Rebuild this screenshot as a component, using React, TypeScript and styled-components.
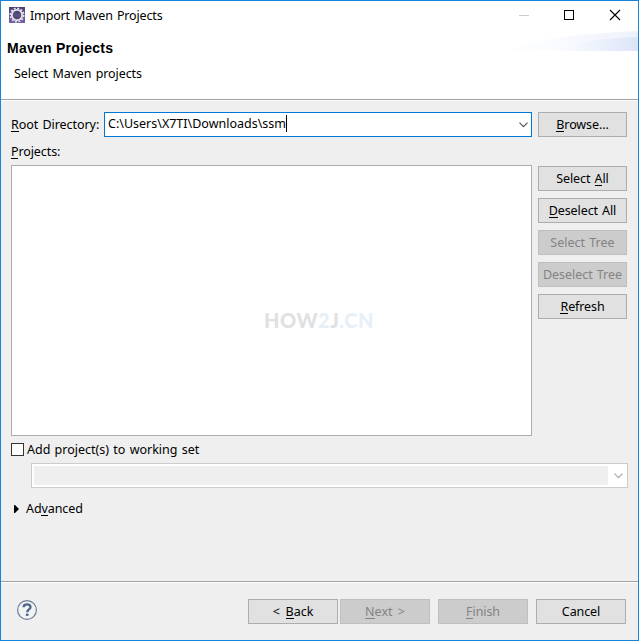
import React from "react";
import styled, { createGlobalStyle } from "styled-components";

const GlobalStyle = createGlobalStyle`
  * { box-sizing: border-box; }
  body {
    margin: 0;
    background: #efefef;
    font: 12.5px/17px "Noto Sans", "Noto Sans CJK SC", sans-serif;
    color: #000;
  }
`;

const Window = styled.main`
  width: 639px;
  height: 641px;
  border: 1px solid #1883d7;
  background: #efefef;
  display: flex;
  flex-direction: column;
  overflow: hidden;
`;

const Label = styled.span<{ $spacing?: number; $word?: number }>`
  white-space: pre;
  letter-spacing: ${(p) => p.$spacing ?? 0}px;
  word-spacing: ${(p) => p.$word ?? 1}px;
`;

const Key = styled.span`
  box-shadow: 0 1px 0 currentColor;
  display: inline-block;
  height: 15px;
  line-height: 17px;
  vertical-align: top;
`;

const TitleBar = styled.header`
  height: 30px;
  background: #fff;
  display: flex;
  align-items: flex-start;
  padding: 6px 0 0 8px;
`;

const TitleText = styled(Label)`
  margin-left: 5px;
  flex: 1;
`;

const WindowControls = styled.svg`
  width: 119px;
  height: 20px;
  display: block;
`;

const Banner = styled.section`
  height: 69px;
  background: #fff;
  border-bottom: 1px solid #a0a0a0;
  display: flex;
  justify-content: space-between;
`;

const BannerText = styled.div`
  padding: 9px 0 0 6px;
  display: flex;
  flex-direction: column;
`;

const Heading = styled.h1<{ $spacing: number }>`
  margin: 0;
  font: bold 14px/17px "Liberation Sans", Arial, sans-serif;
  letter-spacing: ${(p) => p.$spacing}px;
`;

const Subtitle = styled(Label)`
  margin: 8px 0 0 7px;
`;

const Swoosh = styled.svg`
  width: 140px;
  height: 20px;
  display: block;
`;

const Body = styled.section`
  flex: 1;
  border-top: 1px solid #fff;
  padding: 11px 10px 0;
  display: flex;
  flex-direction: column;
`;

const Row = styled.div`
  display: flex;
  align-items: flex-start;
`;

const FieldLabel = styled.label`
  width: 93px;
  padding-top: 4px;
  white-space: nowrap;
`;

const Combo = styled.div`
  width: 428px;
  height: 25px;
  border: 1px solid #0078d7;
  background: #fff;
  display: flex;
  align-items: center;
  padding: 0 3px;
  margin-right: 6px;
`;

const ComboText = styled.div`
  flex: 1;
  display: flex;
  align-items: center;
  padding-bottom: 2px;
`;

const Caret = styled.i`
  width: 1px;
  height: 17px;
  background: #000;
`;

const Chevron = styled.svg`
  width: 9px;
  height: 6px;
  display: block;
`;

const Button = styled.button<{ $width: number }>`
  width: ${(p) => p.$width}px;
  height: 25px;
  padding: 0;
  border: 1px solid #adadad;
  border-radius: 0;
  background: #e1e1e1;
  color: #000;
  font: inherit;
  display: flex;
  justify-content: center;
  align-items: center;
  &:disabled {
    background: #ccc;
    border-color: #bfbfbf;
    color: #838383;
  }
`;

const ProjectsLabel = styled.div`
  padding-top: 6px;
  height: 28px;
`;

const ProjectList = styled.div`
  width: 521px;
  height: 271px;
  border: 1px solid #abadb3;
  background: #fff;
  margin-right: 6px;
  display: flex;
  justify-content: center;
  align-items: center;
`;

const Watermark = styled.div`
  margin: 38px 0 0 95px;
  font: 900 20px/24px Lato, sans-serif;
  letter-spacing: 0.5px;
  color: #e0e1e3;
`;

const WatermarkBlue = styled.span`
  color: #e7f0f9;
`;

const ButtonColumn = styled.div`
  display: flex;
  flex-direction: column;
  gap: 7px;
  padding-top: 1px;
`;

const CheckRow = styled.label`
  display: flex;
  align-items: center;
  gap: 3px;
  margin-top: 5px;
  height: 17px;
`;

const CheckBox = styled.span`
  width: 13px;
  height: 13px;
  border: 1px solid #333;
  background: #fff;
`;

const DisabledCombo = styled.div`
  width: 597px;
  height: 25px;
  margin: 5px 0 0 20px;
  border: 1px solid #ccc;
  background: #fff;
  padding: 2px 4px 2px 2px;
  display: flex;
  align-items: center;
  justify-content: space-between;
`;

const DisabledField = styled.div`
  width: 574px;
  height: 19px;
  background: #efefef;
`;

const AdvancedRow = styled.div`
  display: flex;
  align-items: center;
  gap: 7px;
  margin: 12px 0 0 3px;
  height: 17px;
`;

const Triangle = styled.svg`
  width: 5px;
  height: 8px;
`;

const Footer = styled.footer`
  height: 59px;
  border-top: 1px solid #a0a0a0;
  box-shadow: inset 0 1px 0 #fff;
  padding: 17px 12px 0 15px;
  display: flex;
  align-items: flex-start;
`;

const HelpIcon = styled.svg`
  width: 22px;
  height: 22px;
  margin-right: auto;
`;

const ButtonPair = styled.div`
  display: flex;
  gap: 2px;
  margin-right: 8px;
`;

const LastButtons = styled.div`
  display: flex;
  gap: 8px;
`;

function EclipseIcon() {
  return (
    <svg width="16" height="16" viewBox="0 0 16 16">
      <defs>
        <linearGradient id="purple" x1="0" y1="0" x2="0" y2="1">
          <stop offset="0" stopColor="#4b3f76" />
          <stop offset="1" stopColor="#7460a4" />
        </linearGradient>
      </defs>
      <rect width="16" height="16" fill="url(#purple)" />
      <circle cx="8" cy="8" r="6.7" fill="none" stroke="#e9e7ee" strokeWidth="1.6" strokeDasharray="2 1.51" />
      <circle cx="8" cy="8" r="5.2" fill="#4c4374" stroke="#e4e2ea" strokeWidth="1.8" />
      <path d="M4 7.2h8M4 9h8" stroke="#6f668f" strokeWidth="0.7" />
    </svg>
  );
}

function DownChevron({ color }: { color: string }) {
  return (
    <Chevron viewBox="0 0 9 6">
      <path d="M0.5 0.7L4.5 4.7L8.5 0.7" fill="none" stroke={color} strokeWidth="1.2" />
    </Chevron>
  );
}

export default function App() {
  return (
    <>
      <GlobalStyle />
      <Window>
        <TitleBar>
          <EclipseIcon />
          <TitleText $spacing={-0.15}>Import Maven Projects</TitleText>
          <WindowControls viewBox="0 0 119 20">
            <path d="M0 8.5h10" stroke="#ccc" />
            <rect x="45.5" y="3.5" width="9" height="9" fill="none" stroke="#000" />
            <path d="M91 3l10 10M101 3l-10 10" stroke="#000" strokeWidth="1.1" />
          </WindowControls>
        </TitleBar>
        <Banner>
          <BannerText>
            <Heading $spacing={0.25}>Maven Projects</Heading>
            <Subtitle $spacing={-0.08}>Select Maven projects</Subtitle>
          </BannerText>
          <Swoosh viewBox="0 0 140 20">
            <defs>
              <linearGradient id="sky" x1="0" x2="1">
                <stop offset="0" stopColor="#fff" />
                <stop offset="0.4" stopColor="#f4f7fe" />
                <stop offset="1" stopColor="#dce4f7" />
              </linearGradient>
            </defs>
            <path d="M2 20C42 7 90 2 140 0V20Z" fill="url(#sky)" opacity="0.5" />
            <path d="M42 20C80 10 110 7 140 6V20Z" fill="url(#sky)" />
          </Swoosh>
        </Banner>
        <Body>
          <Row>
            <FieldLabel><Label $spacing={-0.05}><Key>R</Key>oot Directory:</Label></FieldLabel>
            <Combo>
              <ComboText>
                <Label>C:\Users\X7TI\Downloads\ssm</Label>
                <Caret />
              </ComboText>
              <DownChevron color="#555" />
            </Combo>
            <Button $width={89}><Label $spacing={-0.1}><Key>B</Key>rowse...</Label></Button>
          </Row>
          <ProjectsLabel><Label $spacing={-0.1}><Key>P</Key>rojects:</Label></ProjectsLabel>
          <Row>
            <ProjectList>
              <Watermark>
                HOW<WatermarkBlue>2</WatermarkBlue>J<WatermarkBlue>.CN</WatermarkBlue>
              </Watermark>
            </ProjectList>
            <ButtonColumn>
              <Button $width={89}><Label $spacing={-0.1}>Select <Key>A</Key>ll</Label></Button>
              <Button $width={89}><Label $spacing={-0.1}><Key>D</Key>eselect All</Label></Button>
              <Button $width={89} disabled><Label>Select Tree</Label></Button>
              <Button $width={89} disabled><Label $spacing={-0.05}>Deselect Tree</Label></Button>
              <Button $width={89}><Label $spacing={-0.1}><Key>R</Key>efresh</Label></Button>
            </ButtonColumn>
          </Row>
          <CheckRow>
            <CheckBox />
            <Label>Add project(s) to working set</Label>
          </CheckRow>
          <DisabledCombo>
            <DisabledField />
            <DownChevron color="#aaa" />
          </DisabledCombo>
          <AdvancedRow>
            <Triangle viewBox="0 0 5 8"><path d="M0 0h1l4 4-4 4H0z" /></Triangle>
            <Label $spacing={-0.1}>Ad<Key>v</Key>anced</Label>
          </AdvancedRow>
        </Body>
        <Footer>
          <HelpIcon viewBox="0 0 22 22">
            <circle cx="11" cy="11" r="9.4" fill="#f2f3f5" stroke="#6c7d98" strokeWidth="1.2" />
            <path d="M7.6 8.2C7.6 4.4 14.5 4.5 14.5 8C14.5 10.4 11.2 10.3 11.2 13.2" fill="none" stroke="#50658a" strokeWidth="2.3" />
            <rect x="9.9" y="14.6" width="2.6" height="2.3" fill="#50658a" />
          </HelpIcon>
          <ButtonPair>
            <Button $width={90}><Label $word={2.5}>&lt; <Key>B</Key>ack</Label></Button>
            <Button $width={90} disabled><Label $word={2}><Key>N</Key>ext &gt;</Label></Button>
          </ButtonPair>
          <LastButtons>
            <Button $width={90} disabled><Label $spacing={-0.1}><Key>F</Key>inish</Label></Button>
            <Button $width={90}><Label $spacing={-0.1}>Cancel</Label></Button>
          </LastButtons>
        </Footer>
      </Window>
    </>
  );
}
